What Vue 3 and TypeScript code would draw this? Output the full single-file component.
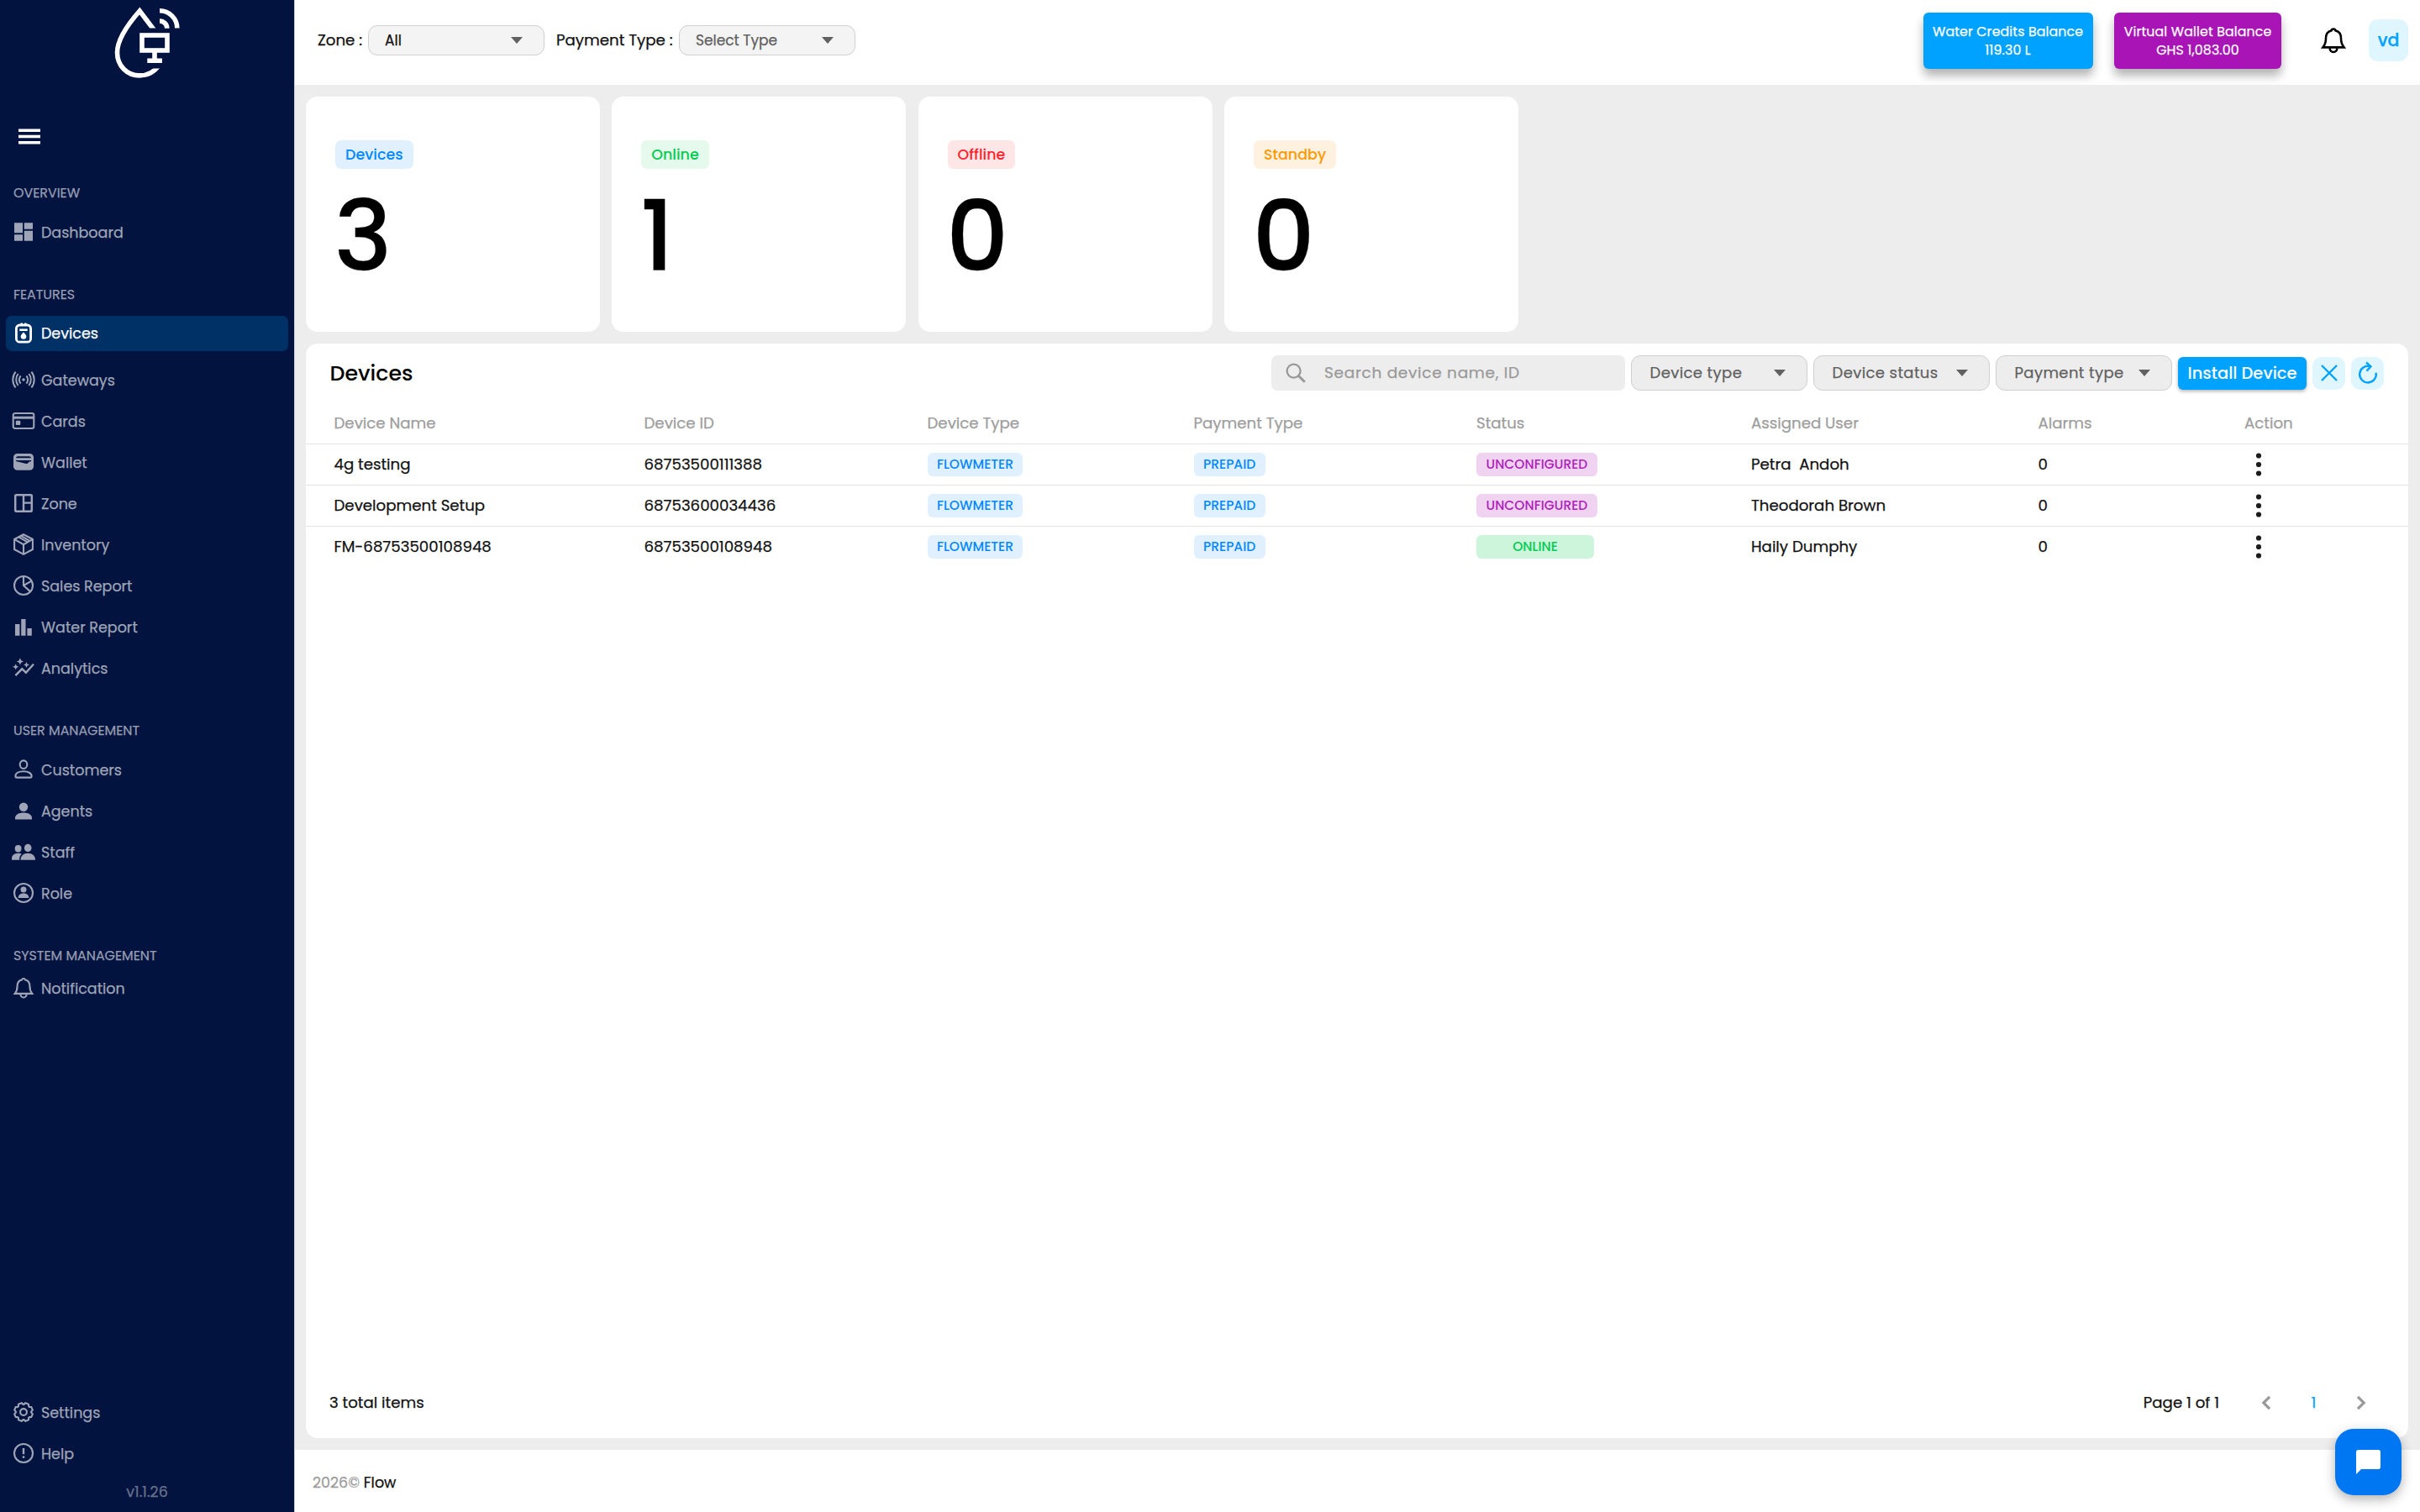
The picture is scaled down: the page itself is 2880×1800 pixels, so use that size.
<script setup lang="ts">
interface NavItem {
  label: string
  icon: string
  active?: boolean
}
interface NavSection {
  title: string
  items: NavItem[]
  tight?: boolean
}
interface Stat {
  label: string
  value: number
  tone: string
}
interface Device {
  name: string
  id: string
  type: string
  payment: string
  status: string
  tone: string
  user: string
  alarms: number
}

// Outline of an eight-toothed cog centred in a 28px box.
function gearPath(): string {
  const points: string[] = []
  const at = (radius: number, degrees: number) => {
    const a = (degrees * Math.PI) / 180
    return `${(14 + radius * Math.cos(a)).toFixed(2)} ${(14 + radius * Math.sin(a)).toFixed(2)}`
  }
  for (let i = 0; i < 8; i++) {
    const mid = 22.5 + i * 45
    points.push(at(9.1, mid - 20), at(11.1, mid - 10), at(11.1, mid + 10), at(9.1, mid + 20))
  }
  return `M${points.join('L')}Z`
}

const bell =
  '<path d="M3.7 20.9C6.1 18 6.6 16 6.6 12c0-4.5 2-6.6 5.2-7.4a2.3 2.3 0 0 1 4.4 0c3.2.8 5.2 2.9 5.2 7.4 0 4 .5 6 2.9 8.9z"/><path d="M10.4 21.6a3.6 3.9 0 0 0 7.2 0"/>'

const strokeIcons: Record<string, string> = {
  gateways:
    '<g stroke-width="2"><path d="M4.6 4.6a15 15 0 0 0 0 18.8M23.4 4.6a15 15 0 0 1 0 18.8M7.6 7a11.5 11.5 0 0 0 0 14M20.4 7a11.5 11.5 0 0 1 0 14M10.6 9.4a7.6 7.6 0 0 0 0 9.2M17.4 9.4a7.6 7.6 0 0 1 0 9.2"/></g><circle cx="14" cy="14" r="1.8" fill="currentColor" stroke="none"/>',
  cards:
    '<rect x="1.7" y="5" width="24.6" height="18" rx="2.2"/><path d="M2 10.2h24" stroke-width="3"/><rect x="4.8" y="13.8" width="5.5" height="5.3" rx="1" fill="currentColor" stroke="none"/>',
  zone: '<rect x="4.2" y="4.2" width="19.6" height="19.6" rx="1" stroke-width="2.5"/><path d="M14 4v20M14 13.6h10" stroke-width="2.4"/>',
  inventory:
    '<path d="M14 2.2 24.9 8v12L14 25.9 3.1 20V8zM3.4 8.2 14 14.2l10.6-6M14 14.2V25.6M9.1 11.3l10.6-6M6.6 9.9l10-5.8" transform="matrix(-1 0 0 1 28 0)"/>',
  sales: '<circle cx="14" cy="14" r="11"/><path d="M14 3v11l8.2 7.4M14 14l9.6-5.4"/>',
  customers:
    '<ellipse cx="14" cy="8.2" rx="4.3" ry="4.8"/><path d="M4.4 22c0-3.8 4.6-5.7 9.6-5.7s9.6 1.9 9.6 5.7q0 1.6-1.5 1.6H5.9q-1.5 0-1.5-1.6z"/>',
  role: '<circle cx="14" cy="14" r="11"/><circle cx="14" cy="10" r="3.5" fill="currentColor" stroke="none"/><path d="M7.7 20c0-3.7 2.9-5.4 6.3-5.4s6.3 1.7 6.3 5.4z" fill="currentColor" stroke="none"/>',
  notification: bell,
  settings: `<path d="${gearPath()}" stroke-linejoin="round"/><circle cx="14" cy="14" r="3.9"/>`,
  help: '<circle cx="14" cy="14" r="11"/><path d="M14 8v7.2" stroke-width="2.4"/><circle cx="14" cy="18.7" r="1.4" fill="currentColor" stroke="none"/>',
}

const fillIcons: Record<string, string> = {
  dashboard: '<path d="M3 3.3h10v12H3zM3 17.3h10v7.4H3zM14.8 3.3H25v7.4H14.8zM14.8 12.7H25v12H14.8z"/>',
  devices:
    '<rect x="5.4" y="5" width="17.2" height="20.2" rx="4" fill="none" stroke="currentColor" stroke-width="2.8"/><path d="M10.6 2.6h2.3v3h-2.3zM15.2 2.6h2.3v3h-2.3zM9.3 9.6h9.4v2.5H9.3z"/><path d="M14 13.4c2 2 3.3 3.4 3.3 5a3.3 3.3 0 0 1-6.6 0c0-1.6 1.3-3 3.3-5z"/>',
  wallet:
    '<path fill-rule="evenodd" d="M6.6 4h14.8A4.6 4.6 0 0 1 26 8.6v10.6a4.6 4.6 0 0 1-4.6 4.6H6.6A4.6 4.6 0 0 1 2 19.2V8.6A4.6 4.6 0 0 1 6.6 4zM4.9 9.3h18.2q-.5-2-2.3-2H7.2q-1.8 0-2.3 2zM4.9 12.1v1L17 15.9q1.6.3 2.6-.8l.8-1q.4-.6 1.2-.7l1.5-.2v-1.1z"/>',
  water: '<path d="M4 11.1h5.4v13.6H4zM11.2 5h5.3v19.7h-5.3zM18.4 16h5.4v8.7h-5.4z"/>',
  analytics:
    '<path transform="scale(1.1667)" d="M14.06 9.94 12 9l2.06-.94L15 6l.94 2.06L18 9l-2.06.94L15 12zM4 14l.94-2.06L7 11l-2.06-.94L4 8l-.94 2.06L1 11l2.06.94zM8.5 9l1.09-2.41L12 5.5 9.59 4.41 8.5 2 7.41 4.41 5 5.5l2.41 1.09zM4.5 20.5l6-6.01 4 4L23 8.93l-1.41-1.41-7.09 7.97-4-4L3 19z"/>',
  agents: '<circle cx="14" cy="9.8" r="5.2"/><path d="M4 24.4v-1.6c0-4.4 5-6.4 10-6.4s10 2 10 6.4v1.6z"/>',
  staff:
    '<ellipse cx="7.6" cy="10.2" rx="3.9" ry="4.2"/><ellipse cx="19.2" cy="9.4" rx="4.3" ry="4.6"/><path d="M0 23.8v-1.6c0-4.4 3.6-6.4 7.6-6.4 1.8 0 3.2.4 4.2 1-2 1.4-2.7 3.4-2.7 7z"/><path d="M10.5 23.8c0-5.4 4-8 8.7-8s8.800 2.600 8.800 8z"/>',
}

const sections: NavSection[] = [
  { title: 'OVERVIEW', items: [{ label: 'Dashboard', icon: 'dashboard' }] },
  {
    title: 'FEATURES',
    items: [
      { label: 'Devices', icon: 'devices', active: true },
      { label: 'Gateways', icon: 'gateways' },
      { label: 'Cards', icon: 'cards' },
      { label: 'Wallet', icon: 'wallet' },
      { label: 'Zone', icon: 'zone' },
      { label: 'Inventory', icon: 'inventory' },
      { label: 'Sales Report', icon: 'sales' },
      { label: 'Water Report', icon: 'water' },
      { label: 'Analytics', icon: 'analytics' },
    ],
  },
  {
    title: 'USER MANAGEMENT',
    items: [
      { label: 'Customers', icon: 'customers' },
      { label: 'Agents', icon: 'agents' },
      { label: 'Staff', icon: 'staff' },
      { label: 'Role', icon: 'role' },
    ],
  },
  { title: 'SYSTEM MANAGEMENT', tight: true, items: [{ label: 'Notification', icon: 'notification' }] },
]

const bottomItems: NavItem[] = [
  { label: 'Settings', icon: 'settings' },
  { label: 'Help', icon: 'help' },
]

const stats: Stat[] = [
  { label: 'Devices', value: 3, tone: 'blue' },
  { label: 'Online', value: 1, tone: 'green' },
  { label: 'Offline', value: 0, tone: 'red' },
  { label: 'Standby', value: 0, tone: 'orange' },
]

const filters = ['Device type', 'Device status', 'Payment type']
const columns = ['Device Name', 'Device ID', 'Device Type', 'Payment Type', 'Status', 'Assigned User', 'Alarms', 'Action']

const devices: Device[] = [
  { name: '4g testing', id: '68753500111388', type: 'FLOWMETER', payment: 'PREPAID', status: 'UNCONFIGURED', tone: 'purple', user: 'Petra  Andoh', alarms: 0 },
  { name: 'Development Setup', id: '68753600034436', type: 'FLOWMETER', payment: 'PREPAID', status: 'UNCONFIGURED', tone: 'purple', user: 'Theodorah Brown', alarms: 0 },
  { name: 'FM-68753500108948', id: '68753500108948', type: 'FLOWMETER', payment: 'PREPAID', status: 'ONLINE', tone: 'mint', user: 'Haily Dumphy', alarms: 0 },
]
</script>

<template>
  <div class="app">
    <aside class="sidebar">
      <svg class="logo" width="78" height="86" viewBox="136 8 78 86" fill="none" stroke="#fff" stroke-width="5.6">
        <clipPath id="drop-gap"><path d="M130 0h90v33.500h-50v48h50V100h-90z" /></clipPath>
        <path clip-path="url(#drop-gap)" d="M187 40.500 166.200 13C153 28 139.500 46 139.500 62.500c0 16 12 27.400 26.500 27.400 9.500 0 17.800-4.400 23.500-12.400" />
        <rect x="169" y="42" width="30" height="18" />
        <path d="M184 62v9M175.300 72.200h17.600M190 25a8.800 8.800 0 0 1 8.800 8.800M190 12.800a20.800 20.800 0 0 1 20.800 20.800" />
      </svg>
      <svg class="menu" width="26" height="19" viewBox="0 0 26 19" fill="#fff">
        <path d="M0 .5h26v3.500H0zM0 7.700h26v3.500H0zM0 14.900h26v3.500H0z" />
      </svg>

      <nav>
        <section v-for="section in sections" :key="section.title" class="section" :class="{ tight: section.tight }">
          <h4>{{ section.title }}</h4>
          <a v-for="item in section.items" :key="item.label" class="item" :class="{ active: item.active }">
            <svg v-if="strokeIcons[item.icon]" class="icon line" viewBox="0 0 28 28" v-html="strokeIcons[item.icon]" />
            <svg v-else class="icon" viewBox="0 0 28 28" v-html="fillIcons[item.icon]" />
            <span>{{ item.label }}</span>
          </a>
        </section>
      </nav>

      <div class="bottom">
        <a v-for="item in bottomItems" :key="item.label" class="item">
          <svg class="icon line" viewBox="0 0 28 28" v-html="strokeIcons[item.icon]" />
          <span>{{ item.label }}</span>
        </a>
        <div class="version">v1.1.26</div>
      </div>
    </aside>

    <div class="page">
      <header class="topbar">
        <label class="zone-label">Zone :</label>
        <div class="select small chosen"><span>All</span><i class="caret" /></div>
        <label class="pay-label">Payment Type :</label>
        <div class="select small"><span>Select Type</span><i class="caret" /></div>

        <div class="balance water"><span>Water Credits Balance</span><span>119.30 L</span></div>
        <div class="balance wallet"><span>Virtual Wallet Balance</span><span>GHS 1,083.00</span></div>
        <svg class="bell" width="34" height="34" viewBox="0 0 28 28" v-html="bell" />
        <div class="avatar">vd</div>
      </header>

      <main class="content">
        <div class="stats">
          <div v-for="stat in stats" :key="stat.label" class="stat">
            <span class="stat-label" :class="stat.tone">{{ stat.label }}</span>
            <span class="stat-value">{{ stat.value }}</span>
          </div>
        </div>

        <div class="panel">
          <div class="toolbar">
            <h2>Devices</h2>
            <div class="search">
              <svg width="24" height="24" viewBox="0 0 24 24" fill="none" stroke="#999" stroke-width="2.3">
                <circle cx="9.600" cy="9.600" r="8" /><path d="m15.200 15.200 7.600 7.600" stroke-width="3" />
              </svg>
              <span>Search device name, ID</span>
            </div>
            <div v-for="filter in filters" :key="filter" class="select filter"><span>{{ filter }}</span><i class="caret" /></div>
            <button class="install">Install Device</button>
            <button class="square">
              <svg width="22" height="22" viewBox="0 0 22 22"><path d="M2 2l18 18M20 2 2 20" /></svg>
            </button>
            <button class="square">
              <svg width="24" height="28" viewBox="0 0 24 28"><path d="M21.600 13.800A9.800 9.800 0 1 1 14.600 6.200M10 1.500l5.400 4.900-4.900 5.200" /></svg>
            </button>
          </div>

          <div class="row head">
            <span v-for="column in columns" :key="column">{{ column }}</span>
          </div>
          <div v-for="device in devices" :key="device.id" class="row">
            <span>{{ device.name }}</span>
            <span>{{ device.id }}</span>
            <span><b class="chip blue">{{ device.type }}</b></span>
            <span><b class="chip blue">{{ device.payment }}</b></span>
            <span><b class="chip status" :class="device.tone">{{ device.status }}</b></span>
            <span>{{ device.user }}</span>
            <span>{{ device.alarms }}</span>
            <svg class="dots" width="8" height="30" viewBox="0 0 8 30" fill="#1c1c1c">
              <circle cx="4" cy="4.500" r="3.100" /><circle cx="4" cy="15" r="3.100" /><circle cx="4" cy="25.500" r="3.100" />
            </svg>
          </div>

          <div class="pager">
            <span class="total">3 total items</span>
            <span class="pages">Page 1 of 1</span>
            <svg width="12" height="18" viewBox="0 0 12 18"><path d="M10 1.800 2.800 9l7.200 7.200" /></svg>
            <span class="current">1</span>
            <svg width="12" height="18" viewBox="0 0 12 18"><path d="M2 1.800 9.200 9 2 16.200" /></svg>
          </div>
        </div>
      </main>

      <footer class="footer"><span>2026©</span> Flow</footer>
    </div>

    <button class="chat">
      <svg width="29" height="29" viewBox="0 0 29 29" fill="#fff"><path d="M2.800 0h23.400A2.800 2.800 0 0 1 29 2.800v17.400a2.800 2.800 0 0 1-2.800 2.800H6L0 29V2.800A2.800 2.800 0 0 1 2.800 0z" /></svg>
    </button>
  </div>
</template>

<style>
body {
  margin: 0;
}
</style>

<style scoped>
.app {
  position: relative;
  display: flex;
  width: 2880px;
  height: 1800px;
  overflow: hidden;
  background: #ededed;
  color: #111;
  font-family: Poppins, Inter, 'Noto Sans', sans-serif;
  font-size: 18.2px;
  font-weight: 400;
  line-height: 1;
  -webkit-text-stroke: 0.25px;
}
.app * {
  box-sizing: border-box;
}
button {
  border: 0;
  padding: 0;
  font: inherit;
}

/* Sidebar */
.sidebar {
  display: flex;
  flex-direction: column;
  flex: none;
  width: 351px;
  border-right: 1px solid #c9ccd6;
  background: #021340;
  color: #9fa5b7;
  font-size: 17.5px;
}
.logo {
  margin: 8px 0 0 136px;
}
.menu {
  margin: 59px 0 46px 22px;
}
.section {
  margin-bottom: 41px;
}
.section h4 {
  height: 24px;
  margin: 0 0 14px 16px;
  line-height: 24px;
  font-size: 15.85px;
  font-weight: 400;
  color: #979db1;
}
.section:nth-child(2) h4 {
  margin-bottom: 13px;
}
.section.tight h4 {
  margin-bottom: 6px;
}
.item {
  display: flex;
  align-items: center;
  height: 42px;
  margin: 0 7px 7px;
  padding-left: 7px;
  border-radius: 7px;
}
.item span {
  padding-top: 2px;
}
.item.active {
  margin-bottom: 14px;
  background: #003166;
  color: #fff;
}
.icon {
  width: 28px;
  height: 28px;
  margin: 0 7px 2px 0;
  fill: currentColor;
  overflow: visible;
}
.icon.line {
  fill: none;
  stroke: currentColor;
  stroke-width: 2.1;
}
.bottom {
  margin-top: auto;
}
.version {
  margin: 12px 0;
  height: 24px;
  line-height: 24px;
  text-align: center;
  color: #67708b;
}

/* Top bar */
.page {
  display: flex;
  flex-direction: column;
  flex: 1;
}
.topbar {
  display: flex;
  align-items: center;
  height: 101px;
  padding: 0 14px 5px 27px;
  background: #fff;
}
.zone-label {
  width: 60px;
}
.pay-label {
  width: 146px;
  margin-left: 14px;
}
.select {
  display: flex;
  align-items: center;
  justify-content: space-between;
  flex: none;
  width: 210px;
  height: 42px;
  padding: 0 25.5px 0 21.5px;
  border: 1.5px solid #cfcfcf;
  border-radius: 11px;
  background: #ededed;
  color: #606060;
}
.select.small {
  height: 36px;
  padding: 0 25px 0 19px;
  background: #f4f4f4;
  font-size: 17px;
}
.select.chosen {
  color: #111;
}
.caret {
  border: 7.5px solid transparent;
  border-top: 8.5px solid #616161;
  border-bottom: 0;
}
.balance {
  display: flex;
  flex-direction: column;
  align-items: center;
  justify-content: center;
  height: 67px;
  padding-top: 2px;
  border-radius: 6px;
  color: #fff;
  font-size: 15.75px;
  line-height: 22.5px;
  letter-spacing: 0.14px;
  box-shadow: 0 8px 12px rgba(0, 0, 0, 0.3);
}
.balance.water {
  width: 202px;
  margin-left: auto;
  background: #00a2ff;
}
.balance.wallet {
  width: 199px;
  margin-left: 25.5px;
  background: #a814b6;
}
.bell {
  margin: 0 25px 0 45px;
  fill: none;
  stroke: #000;
  stroke-width: 2.1;
}
.avatar {
  width: 47px;
  height: 50px;
  border-radius: 11px;
  background: #e0f6ff;
  color: #00a2ff;
  font-size: 20.5px;
  font-weight: 500;
  line-height: 50px;
  text-align: center;
}

/* Stat cards */
.content {
  display: flex;
  flex-direction: column;
  flex: 1;
  gap: 14px;
  padding: 14px 14px 14px 13px;
}
.stats {
  display: flex;
  gap: 14.3px;
}
.stat {
  display: flex;
  flex-direction: column;
  align-items: flex-start;
  width: 350px;
  height: 280px;
  padding: 52px 35px 0;
  border-radius: 14px;
  background: #fff;
}
.stat-label {
  height: 34px;
  padding: 0 12px;
  border-radius: 7px;
  font-size: 17.5px;
  font-weight: 500;
  line-height: 34px;
  -webkit-text-stroke: 0;
}
.stat-value {
  margin: 23px 0 0 -1.5px;
  font-size: 116px;
  font-weight: 500;
  line-height: 116px;
  color: #000;
}
.blue {
  background: #e0f0ff;
  color: #0088ff;
}
.green {
  background: #e5f9ec;
  color: #00cc52;
}
.red {
  background: #ffe6e6;
  color: #ff1f2d;
}
.orange {
  background: #fff1e0;
  color: #ff9900;
}
.purple {
  background: #f0d3f1;
  color: #af22bb;
}
.mint {
  background: #ccf5dc;
  color: #00cc52;
}

/* Device table */
.panel {
  display: flex;
  flex-direction: column;
  flex: 1;
  border-radius: 14px;
  background: #fff;
}
.toolbar {
  display: flex;
  align-items: center;
  height: 70px;
  padding: 0 29px 0 28.5px;
}
h2 {
  margin: 0 auto 0 0;
  padding-top: 1px;
  color: #000;
  font-size: 25.3px;
  font-weight: 500;
  -webkit-text-stroke: 0;
}
.search {
  display: flex;
  align-items: center;
  gap: 22px;
  width: 421px;
  height: 42px;
  padding-left: 17px;
  border-radius: 7px;
  background: #ededed;
  color: #999;
  font-size: 18.5px;
  letter-spacing: 0.7px;
}
.search span {
  padding-top: 1px;
}
.filter {
  margin-left: 7px;
  font-size: 18px;
  letter-spacing: 0.4px;
}
.install {
  width: 153px;
  height: 39px;
  margin: 0 0 0 7px;
  padding-top: 1px;
  border-radius: 6px;
  background: #00a2ff;
  color: #fff;
  font-size: 19.5px;
  font-weight: 500;
  box-shadow: 0 2px 4px rgba(0, 0, 0, 0.3);
  -webkit-text-stroke: 0;
}
.square {
  display: flex;
  align-items: center;
  justify-content: center;
  width: 39px;
  height: 39px;
  margin-left: 7px;
  border-radius: 11px;
  background: #e0f6ff;
}
.square svg {
  fill: none;
  stroke: #00a2ff;
  stroke-width: 2.4;
}
.row {
  display: grid;
  grid-template-columns: 369px 337px 317px 336.5px 327px 341.5px 245.5px 1fr;
  align-items: center;
  height: 49px;
  padding-left: 33.5px;
  border-top: 1.5px solid #e4e4e4;
  white-space: pre;
}
.row.head {
  padding-top: 1px;
  border: 0;
  color: #9d9d9d;
}
.dots {
  margin-left: 13px;
}
.chip {
  display: inline-block;
  height: 28px;
  padding: 0 11.5px;
  border-radius: 6px;
  font-size: 15.5px;
  font-weight: 500;
  line-height: 28px;
  vertical-align: middle;
  -webkit-text-stroke: 0;
}
.chip.status {
  min-width: 140px;
  text-align: center;
}
.pager {
  display: flex;
  align-items: center;
  height: 28px;
  margin: auto 50px 28px 28px;
}
.pager svg {
  fill: none;
  stroke: #999;
  stroke-width: 3.2;
}
.total {
  margin-right: auto;
}
.pages {
  margin-right: 50px;
}
.current {
  width: 16px;
  margin: 0 42.5px;
  color: #00a2ff;
  text-align: center;
}

.footer {
  height: 74px;
  padding: 31px 0 0 21px;
  background: #fff;
  font-size: 17.5px;
}
.footer span {
  color: #9b9b9b;
}

.chat {
  position: absolute;
  right: 22px;
  bottom: 20px;
  display: flex;
  align-items: center;
  justify-content: center;
  width: 79px;
  height: 79px;
  border-radius: 22px;
  background: #0077f2;
  box-shadow: 0 5px 14px rgba(0, 0, 0, 0.3);
}
</style>
